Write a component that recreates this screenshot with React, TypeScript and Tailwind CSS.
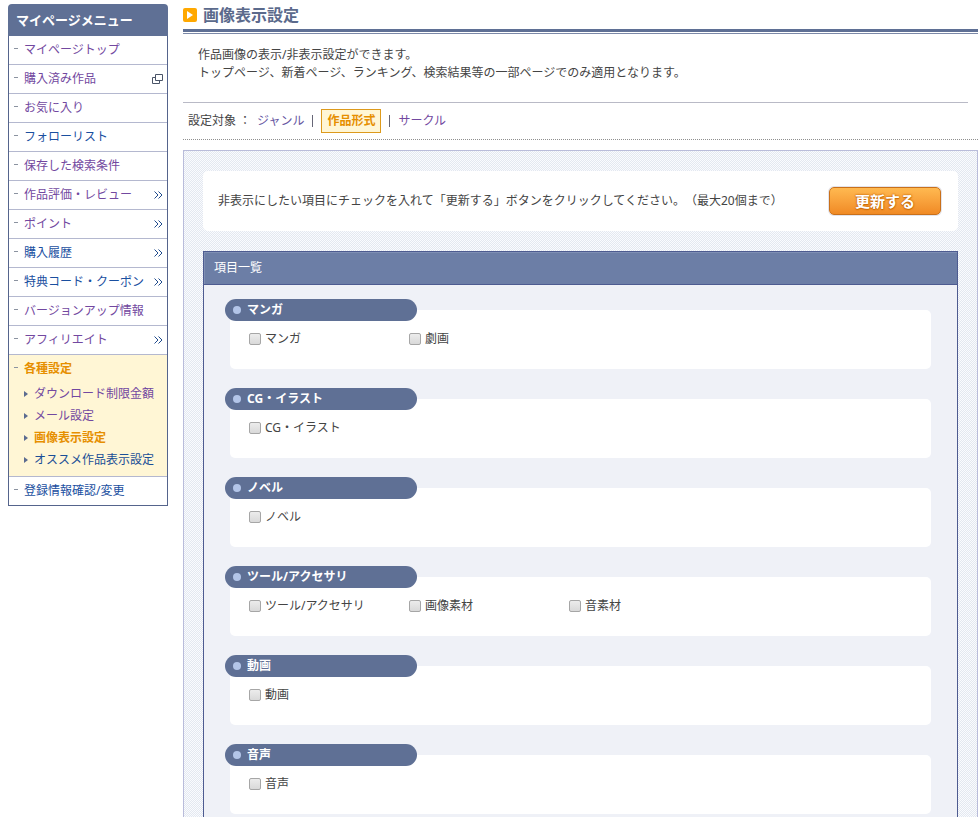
import React from 'react';

type MenuItem = {
  label: string;
  visited?: boolean;
  mark?: 'window' | 'more';
};

const menu: MenuItem[] = [
  { label: 'マイページトップ', visited: true },
  { label: '購入済み作品', visited: true, mark: 'window' },
  { label: 'お気に入り', visited: true },
  { label: 'フォローリスト' },
  { label: '保存した検索条件', visited: true },
  { label: '作品評価・レビュー', visited: true, mark: 'more' },
  { label: 'ポイント', visited: true, mark: 'more' },
  { label: '購入履歴', mark: 'more' },
  { label: '特典コード・クーポン', mark: 'more' },
  { label: 'バージョンアップ情報', visited: true },
  { label: 'アフィリエイト', visited: true, mark: 'more' },
];

const subMenu = [
  { label: 'ダウンロード制限金額', style: 'text-[#7248a0]' },
  { label: 'メール設定', style: 'text-[#7248a0]' },
  { label: '画像表示設定', style: 'font-bold text-[#e68f00]' },
  { label: 'オススメ作品表示設定', style: 'text-[#1a4f97]' },
];

const groups = [
  { title: 'マンガ', options: ['マンガ', '劇画'] },
  { title: 'CG・イラスト', options: ['CG・イラスト'] },
  { title: 'ノベル', options: ['ノベル'] },
  { title: 'ツール/アクセサリ', options: ['ツール/アクセサリ', '画像素材', '音素材'] },
  { title: '動画', options: ['動画'] },
  { title: '音声', options: ['音声'] },
];

function MoreIcon() {
  return (
    <svg width="9" height="8" viewBox="0 0 9 8" fill="none" stroke="#1f4a8c" aria-hidden="true">
      <path d="M.5 .5L4 4 .5 7.5M4.5 .5L8 4 4.5 7.5" />
    </svg>
  );
}

function WindowIcon() {
  return (
    <svg width="11" height="10" viewBox="0 0 11 10" fill="none" stroke="#4a5568" aria-hidden="true">
      <path d="M3.5.5h7v6h-7z" />
      <path d="M3.5 3.5h-3v6h7v-3" />
    </svg>
  );
}

function Dash() {
  return <span className="mb-1 h-px w-1 shrink-0 bg-[#8b93a0]" />;
}

function Sidebar() {
  return (
    <nav className="w-40 shrink-0" aria-label="マイページメニュー">
      <h2 className="flex h-8 items-center rounded-t-[4px] bg-[#5f7095] px-2 text-[13px] font-bold text-white">
        マイページメニュー
      </h2>
      <ul className="border-x border-b border-[#55648c]">
        {menu.map((item) => (
          <li key={item.label} className="flex h-[29px] items-center gap-1.5 border-b border-[#b4b8cf] pr-1 pl-[5px]">
            <Dash />
            <a href="#" className={item.visited ? 'grow text-[#7248a0]' : 'grow text-[#1a4f9f]'}>
              {item.label}
            </a>
            {item.mark === 'more' && <MoreIcon />}
            {item.mark === 'window' && <WindowIcon />}
          </li>
        ))}
        <li className="border-b border-[#b4b8cf] bg-[#fff6d5] pb-[5px]">
          <div className="flex h-7 items-center gap-1.5 pl-[5px]">
            <Dash />
            <a href="#" className="font-bold text-[#e68f00]">
              各種設定
            </a>
          </div>
          <ul>
            {subMenu.map((item) => (
              <li key={item.label} className="flex h-[22px] items-center gap-1.5 pl-[15px]">
                <svg width="4" height="6" viewBox="0 0 4 6" fill="#5b6b90" aria-hidden="true">
                  <path d="M0 0l4 3-4 3z" />
                </svg>
                <a href="#" className={item.style}>
                  {item.label}
                </a>
              </li>
            ))}
          </ul>
        </li>
        <li className="flex h-7 items-center gap-1.5 pl-[5px]">
          <Dash />
          <a href="#" className="text-[#1a4f9f]">
            登録情報確認/変更
          </a>
        </li>
      </ul>
    </nav>
  );
}

function Group({ title, options }: { title: string; options: string[] }) {
  return (
    <fieldset>
      <legend className="relative flex h-[22px] w-48 items-center gap-1.5 rounded-full bg-[#5f7095] pl-2 font-bold text-white">
        <span className="size-2 rounded-full bg-[#b3c5e8]" />
        {title}
      </legend>
      <div className="-mt-[11px] ml-[5px] flex flex-wrap rounded-[5px] bg-white pt-5 pb-[21px] pl-[19px]">
        {options.map((option) => (
          <label key={option} className="flex w-40 items-center gap-1">
            <input
              type="checkbox"
              className="size-3 shrink-0 appearance-none rounded-[2px] border border-[#a6a6a6] bg-linear-to-b from-[#ececec] to-[#d9d9d9] checked:bg-[#5f7095]"
            />
            {option}
          </label>
        ))}
      </div>
    </fieldset>
  );
}

export default function App() {
  return (
    <div className="flex min-h-screen items-stretch gap-[15px] bg-white pl-2 font-['Noto_Sans','Noto_Sans_CJK_JP',sans-serif] text-[12px] leading-[18px] text-[#444444] [text-spacing-trim:space-all]">
      <div className="pt-1">
        <Sidebar />
      </div>
      <main className="flex min-w-0 grow flex-col">
        <div className="flex h-[29px] shrink-0 items-center gap-1.5">
          <svg width="14" height="14" viewBox="0 0 14 14" aria-hidden="true">
            <rect width="14" height="14" rx="2" fill="#ffa800" />
            <path d="M4 3l6 4-6 4z" fill="#fff" />
          </svg>
          <h1 className="text-[16px] font-bold text-[#5b6a8c]">画像表示設定</h1>
        </div>
        <div className="h-[5px] shrink-0 border-t-[3px] border-b border-t-[#5f7095] border-b-[#7c89a8]" />
        <p className="mr-2.5 border-b border-[#b9bac6] px-[15px] pt-3 pb-5">
          作品画像の表示/非表示設定ができます。
          <br />
          トップページ、新着ページ、ランキング、検索結果等の一部ページでのみ適用となります。
        </p>
        <div className="flex h-[37px] shrink-0 items-center border-b border-dotted border-[#8f8f8f] pl-[5px]">
          <span className="w-[69px]">設定対象 ：</span>
          <a href="#" className="text-[#65559f]">
            ジャンル
          </a>
          <span className="mx-2 h-3 w-px bg-[#666677]" />
          <a
            href="#"
            aria-current="page"
            className="border border-[#dd9a1c] bg-[#fff6d5] px-[5px] py-0.5 font-bold text-[#e68f00]"
          >
            作品形式
          </a>
          <span className="mx-2 h-3 w-px bg-[#666677]" />
          <a href="#" className="text-[#7248a0]">
            サークル
          </a>
        </div>
        <form
          className="mt-2.5 flex grow flex-col border-x border-t border-[#b9bcda] bg-[conic-gradient(#fafbfe_25%,#e3e8f0_0_50%,#fafbfe_0_75%,#e3e8f0_0)] bg-size-[2px_2px] px-[19px] pt-5"
          onSubmit={(event) => event.preventDefault()}
        >
          <div className="flex h-[60px] shrink-0 items-center justify-between rounded-[5px] bg-white pr-[17px] pl-[15px]">
            <p>非表示にしたい項目にチェックを入れて「更新する」ボタンをクリックしてください。（最大20個まで）</p>
            <button
              type="submit"
              className="h-7 w-28 shrink-0 rounded-[5px] border border-[#c9701a] bg-linear-to-b from-[#ffb950] to-[#f08a24] text-[15px] leading-6 font-bold text-white shadow-[0_0_0_1px_#e3e3ea] [text-shadow:0_0_2px_#c96a08,0_0_2px_#c96a08,0_1px_1px_#c96a08]"
            >
              更新する
            </button>
          </div>
          <section className="mt-5 flex grow flex-col border-x border-[#4d5b90] bg-[#eff1f7]">
            <h2 className="flex h-[34px] shrink-0 items-center border-y border-[#4d5b90] bg-[#6c7ea6] px-2.5 text-white shadow-[inset_1px_1px_0_#7f8fb4]">
              項目一覧
            </h2>
            <div className="flex flex-col gap-[19px] pt-3.5 pr-[26px] pb-[3px] pl-[21px]">
              {groups.map((group) => (
                <Group key={group.title} title={group.title} options={group.options} />
              ))}
            </div>
          </section>
        </form>
      </main>
    </div>
  );
}
